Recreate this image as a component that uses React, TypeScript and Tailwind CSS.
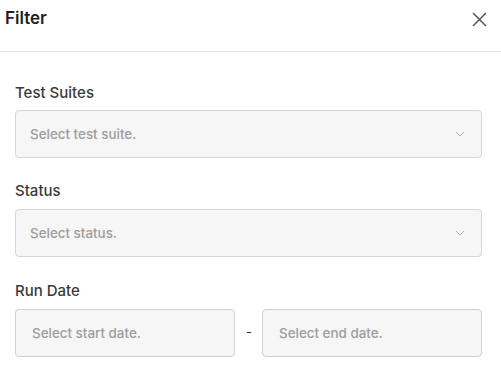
import React from 'react';

const font = { fontFamily: 'Inter, "Noto Sans", sans-serif' };

function Chevron() {
    return (
        <svg width="10" height="6" viewBox="0 0 10 6" fill="none" className="text-[#b0b0b0]">
            <path d="M0.8 0.8 L5 5 L9.2 0.8" stroke="currentColor" strokeWidth="1" />
        </svg>
    );
}

function SelectBox({ placeholder }: { placeholder: string }) {
    return (
        <div className="flex h-[48px] items-center justify-between rounded-[4px] border border-[#d5d5dc] bg-[#f6f6f6] pl-[14px] pr-[16px]">
            <span className="text-[13.4px] font-medium text-[#9d9d9d]">{placeholder}</span>
            <Chevron />
        </div>
    );
}

function DateBox({ placeholder }: { placeholder: string }) {
    return (
        <div className="flex h-[48px] flex-1 items-center rounded-[4px] border border-[#d0d0d0] bg-[#f6f6f6] pl-[16px]">
            <span className="text-[13.4px] font-medium text-[#9d9d9d]">{placeholder}</span>
        </div>
    );
}

export default function App() {
    return (
        <div className="h-[376px] w-[501px] bg-white" style={font}>
            {/* Header */}
            <div className="flex h-[52px] items-start justify-between border-b border-[#e2e2e2] pl-[5px] pr-[14px]">
                <h2 className="pt-[6px] text-[17px] font-semibold leading-[24px] text-[#1f1f1f]">Filter</h2>
                <button className="mt-[12px] text-[#555]">
                    <svg width="15" height="15" viewBox="0 0 15 15" fill="none">
                        <path d="M1 1 L14 14 M14 1 L1 14" stroke="currentColor" strokeWidth="1.5" />
                    </svg>
                </button>
            </div>

            {/* Body */}
            <div className="flex flex-col gap-[23px] pl-[15px] pr-[19px] pt-[31px]">
                <div className="flex flex-col gap-[7px]">
                    <label className="text-[15px] font-medium leading-[20px] text-[#3a3a3a]">Test Suites</label>
                    <SelectBox placeholder="Select test suite." />
                </div>
                <div className="flex flex-col gap-[8px]">
                    <label className="text-[15px] font-medium leading-[20px] text-[#3a3a3a]">Status</label>
                    <SelectBox placeholder="Select status." />
                </div>
                <div className="mt-[1px] flex flex-col gap-[8px]">
                    <label className="text-[15px] font-medium leading-[20px] text-[#3a3a3a]">Run Date</label>
                    <div className="flex items-center gap-[11px]">
                        <DateBox placeholder="Select start date." />
                        <span className="w-[5px] text-[13px] text-[#333]">-</span>
                        <DateBox placeholder="Select end date." />
                    </div>
                </div>
            </div>
        </div>
    );
}
